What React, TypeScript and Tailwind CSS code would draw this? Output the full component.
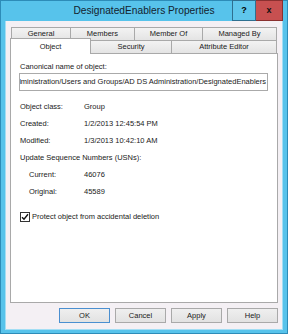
import React from "react";

function BackTab({ label, w, last }: { label: string; w: string; last?: boolean }) {
  return (
    <div
      className={`${w} h-[13px] flex items-center justify-center border-t border-l ${last ? "border-r" : ""} border-[#a9a9a9] bg-[linear-gradient(#f3f3f3,#e4e4e4)] text-[7.5px] text-[#1a1a1a]`}
    >
      {label}
    </div>
  );
}

function Btn({ label, def }: { label: string; def?: boolean }) {
  return (
    <div
      className={`w-[51px] h-[15px] flex items-center justify-center border ${def ? "border-[#4a8fd0]" : "border-[#a9a9a9]"} bg-[linear-gradient(#efefef,#e2e2e2)] text-[7.5px] text-[#1a1a1a]`}
    >
      {label}
    </div>
  );
}

export default function App() {
  return (
    <div className="w-[288px] h-[334px] border border-[#2d8cb8] bg-[#57c3eb] flex flex-col font-['Liberation_Sans',Arial,sans-serif] text-[#1a1a1a]">
      {/* title bar */}
      <div className="relative h-[20px] flex items-center justify-center">
        <span className="text-[10.2px] text-[#13222e]">DesignatedEnablers Properties</span>
        <div className="absolute right-[4px] top-[-1px] flex">
          <div className="w-[24px] h-[21px] border border-[#2f6f90] bg-[#5fc6ec] flex items-center justify-center text-[9px] font-bold text-black">
            ?
          </div>
          <div className="w-[27px] h-[21px] border border-l-0 border-[#8a3030] bg-[#c75050] flex items-center justify-center text-[9px] font-bold text-[#111111]">
            x
          </div>
        </div>
      </div>

      {/* client */}
      <div className="flex-1 mx-[4px] mb-[3px] border-x border-b border-[#a3def4] bg-[#f4f0f4] flex flex-col pt-[6px]">
        {/* back tab row */}
        <div className="flex ml-[5px] relative">
          <BackTab label="General" w="w-[59px]" />
          <BackTab label="Members" w="w-[64px]" />
          <BackTab label="Member Of" w="w-[68px]" />
          <BackTab label="Managed By" w="w-[75px]" last />
        </div>
        {/* front tab row */}
        <div className="flex ml-[4px] h-[15px] items-end -mt-[2px] relative z-10">
          <div className="w-[81px] h-[16px] -mb-[1px] border-t border-x border-[#a9a9a9] bg-white flex items-center justify-center text-[7.5px]">
            Object
          </div>
          <div className="w-[81px] h-[13px] border-t border-r border-[#a9a9a9] bg-[linear-gradient(#f3f3f3,#e4e4e4)] flex items-center justify-center text-[7.5px]">
            Security
          </div>
          <div className="w-[105px] h-[13px] border-t border-r border-[#a9a9a9] bg-[linear-gradient(#f3f3f3,#e4e4e4)] flex items-center justify-center text-[7.5px]">
            Attribute Editor
          </div>
        </div>

        {/* panel */}
        <div className="mx-[4px] h-[250px] border border-[#a9a9a9] bg-white pl-[9px] text-[7.5px] flex flex-col">
          <div className="mt-[7px] h-[12px] leading-[12px]">Canonical name of object:</div>
          <div className="-ml-[1px] w-[249px] h-[18px] border border-[#aaaaaa] flex items-center justify-end overflow-hidden whitespace-nowrap pr-[1px]">
            <span>corp.contoso.com/Administration/Users and Groups/AD DS Administration/DesignatedEnablers</span>
          </div>

          <div className="mt-[7px] flex flex-col">
            <div className="h-[17px] flex items-center">
              <span className="w-[64px]">Object class:</span>
              <span>Group</span>
            </div>
            <div className="h-[17px] flex items-center">
              <span className="w-[64px]">Created:</span>
              <span>1/2/2013 12:45:54 PM</span>
            </div>
            <div className="h-[17px] flex items-center">
              <span className="w-[64px]">Modified:</span>
              <span>1/3/2013 10:42:10 AM</span>
            </div>
            <div className="h-[17px] flex items-center">
              <span>Update Sequence Numbers (USNs):</span>
            </div>
            <div className="h-[17px] flex items-center">
              <span className="w-[64px] pl-[9px]">Current:</span>
              <span>46076</span>
            </div>
            <div className="h-[17px] flex items-center">
              <span className="w-[64px] pl-[9px]">Original:</span>
              <span>45589</span>
            </div>
          </div>

          <div className="mt-[8px] h-[17px] flex items-center">
            <div className="w-[10px] h-[10px] border border-[#333333] bg-white flex items-center justify-center">
              <svg width="8" height="8" viewBox="0 0 8 8">
                <path d="M1 4.2 L3 6.3 L7 1.3" stroke="#111" strokeWidth="1.4" fill="none" />
              </svg>
            </div>
            <span className="ml-[2px]">Protect object from accidental deletion</span>
          </div>
        </div>

        {/* buttons */}
        <div className="mt-[5px] flex justify-end gap-[5px] pr-[4px]">
          <Btn label="OK" def />
          <Btn label="Cancel" />
          <Btn label="Apply" />
          <Btn label="Help" />
        </div>
      </div>
    </div>
  );
}
